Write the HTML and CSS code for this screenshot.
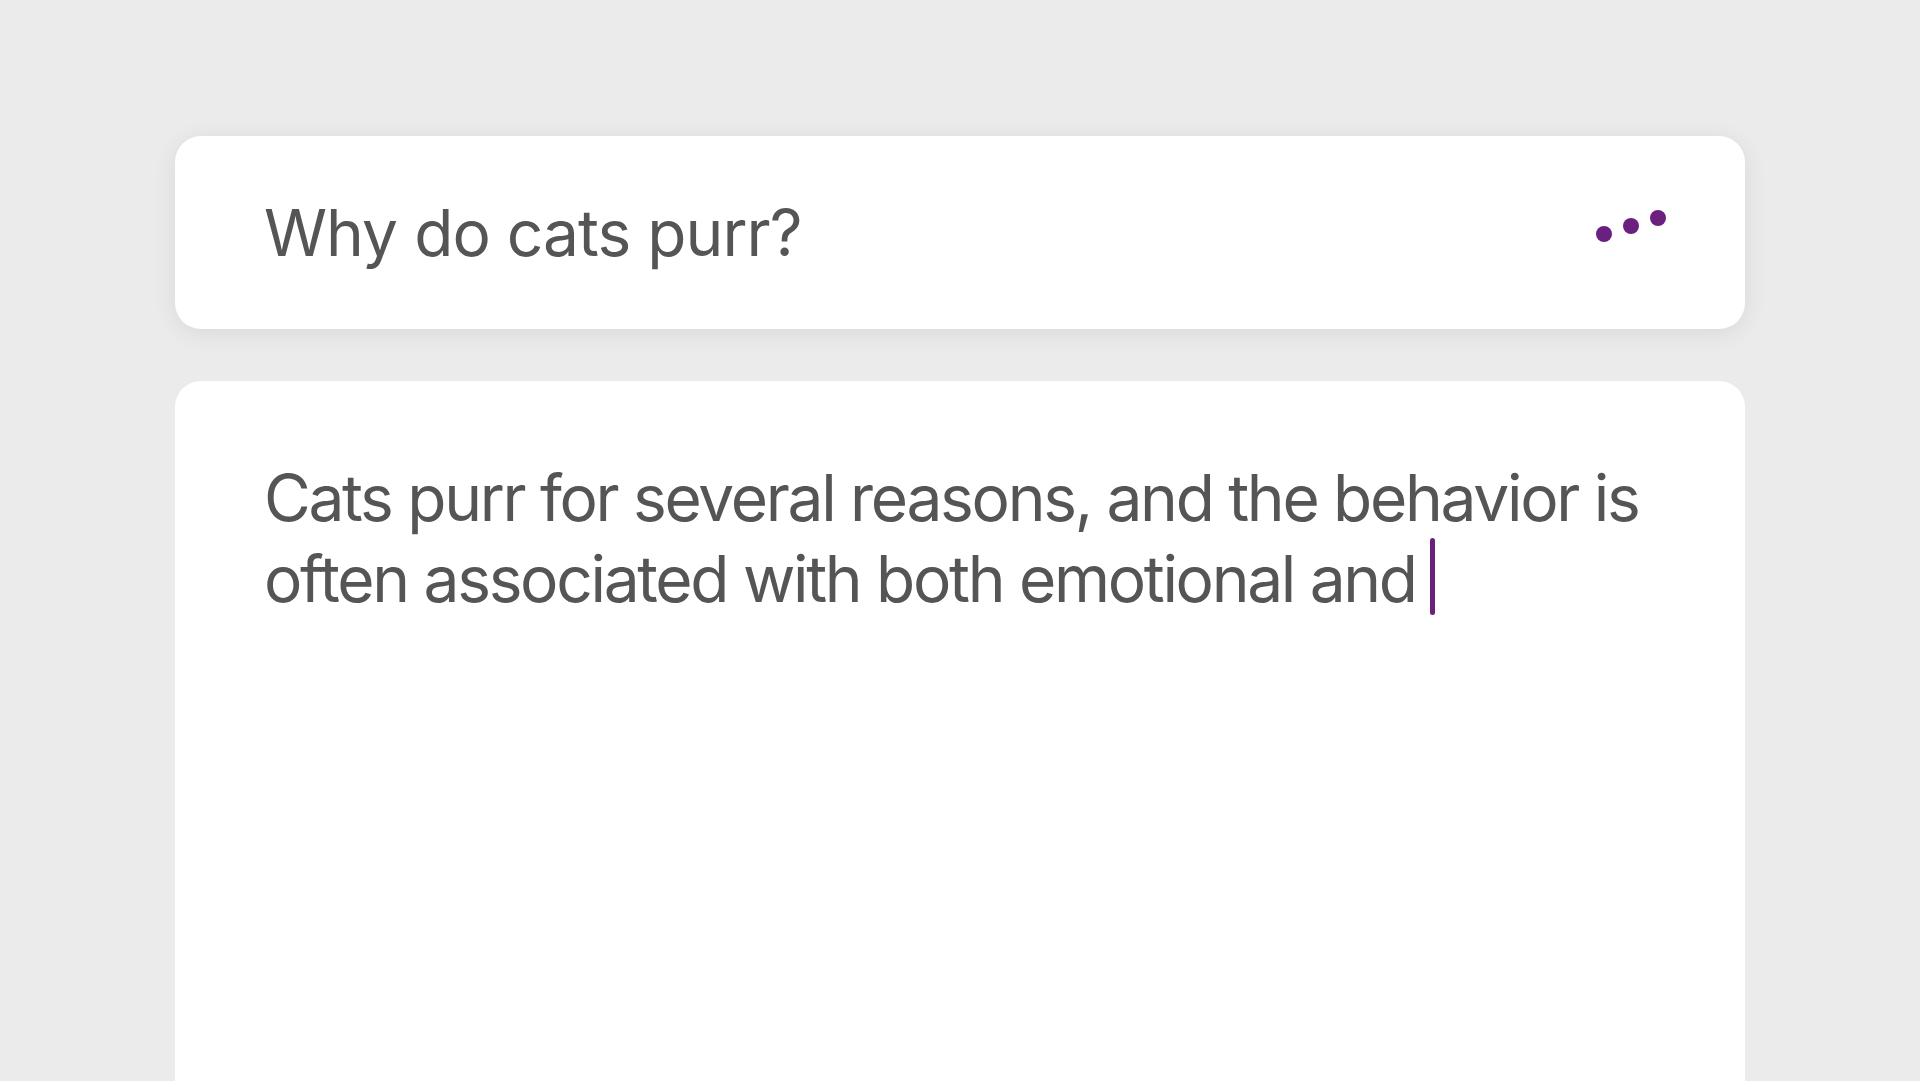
FILE: index.html
```html
<!DOCTYPE html>
<html>
<head>
<meta charset="utf-8">
<link rel="stylesheet" href="styles.css">
</head>
<body>
<main class="page">
  <section class="prompt-card">
    <h1 class="prompt">Why do cats purr?</h1>
    <svg class="dots" width="72" height="36" viewBox="0 0 72 36">
      <circle cx="9" cy="26" r="8" fill="#6b1f7e"/>
      <circle cx="36" cy="18" r="8" fill="#6b1f7e"/>
      <circle cx="63" cy="10" r="8" fill="#6b1f7e"/>
    </svg>
  </section>
  <section class="answer-card">
    <p class="answer">Cats purr for several reasons, and the behavior is often associated with both emotional and<span class="cursor"></span></p>
  </section>
</main>
</body>
</html>
```

FILE: styles.css
```css
html, body {
  margin: 0;
  padding: 0;
  height: 100%;
  overflow: hidden;
}
body {
  background: #ebebeb;
  font-family: "Inter", "Noto Sans", sans-serif;
  color: #555555;
}
.page {
  padding: 136px 175px 0 175px;
  display: flex;
  flex-direction: column;
  gap: 52px;
}
.prompt-card {
  height: 193px;
  background: #ffffff;
  border-radius: 26px;
  box-shadow: 0 4px 24px rgba(0, 0, 0, 0.08);
  display: flex;
  align-items: center;
  justify-content: space-between;
  padding: 0 78px 0 89px;
}
.prompt {
  margin: 0;
  font-weight: 400;
  font-size: 64px;
  line-height: 1;
  letter-spacing: -0.95px;
}
.dots {
  display: block;
  margin-bottom: 14px;
}
.answer-card {
  height: 700px;
  background: #ffffff;
  border-radius: 26px 26px 0 0;
  padding: 77px 60px 0 89px;
}
.answer {
  margin: 0;
  font-size: 64px;
  line-height: 80px;
  letter-spacing: -2.3px;
}
.cursor {
  display: inline-block;
  width: 5px;
  height: 77px;
  background: #6b1f7e;
  border-radius: 3px;
  margin-left: 14px;
  vertical-align: -13px;
}
```
